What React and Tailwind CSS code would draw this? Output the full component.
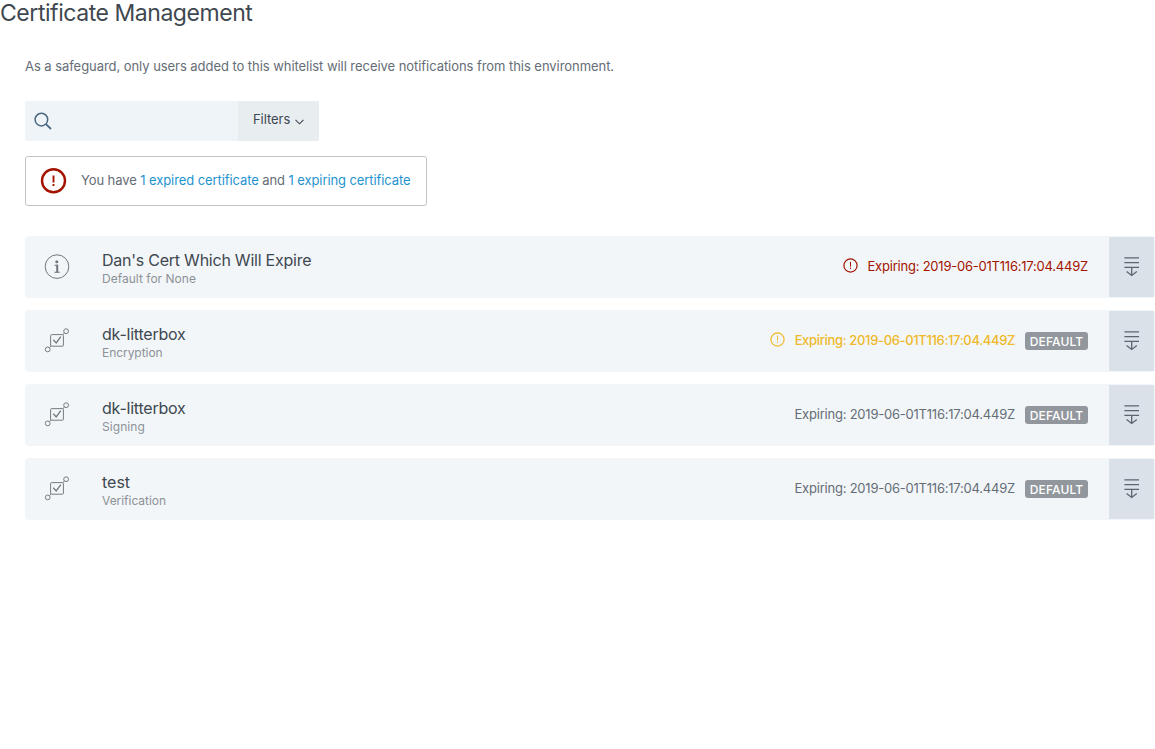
function SearchIcon() {
  return (
    <svg width="18" height="18" viewBox="0 0 18 18" fill="none" stroke="#4a6781" strokeWidth="1.5">
      <circle cx="7.4" cy="7.6" r="6.3" />
      <path d="M12 12.2 17 17" strokeWidth="1.8" />
    </svg>
  );
}

function AlertIcon() {
  return (
    <svg width="27" height="26" viewBox="0 0 27 26" fill="none" stroke="#a31300">
      <circle cx="13.5" cy="12.8" r="11.5" strokeWidth="2.4" />
      <path d="M13.5 7.4V14.4M13.5 16V18" strokeWidth="1.9" />
    </svg>
  );
}

function SmallAlertIcon() {
  return (
    <svg width="15" height="15" viewBox="0 0 15 15" fill="none" stroke="currentColor">
      <circle cx="7.5" cy="7.5" r="6.6" strokeWidth="1.2" />
      <path d="M7.5 3.8V8.6M7.5 9.6V11" strokeWidth="1" />
    </svg>
  );
}

function InfoIcon() {
  return (
    <svg width="26" height="26" viewBox="0 0 26 26" fill="none" stroke="#6f767d">
      <circle cx="13" cy="12.6" r="11.8" strokeWidth="1" />
      <circle cx="12.8" cy="7.7" r="1.5" fill="#6f767d" stroke="none" />
      <path d="M10.5 11.2H13.4M10.4 18.2H15.8" strokeWidth="1.1" />
      <path d="M13.2 10.7V18.4" strokeWidth="2" />
    </svg>
  );
}

function CertIcon() {
  return (
    <svg width="26" height="26" viewBox="0 0 26 26" fill="none" stroke="#757c82" strokeWidth="1">
      <rect x="6.6" y="6.6" width="12.8" height="11.6" rx="1" />
      <path d="M9.3 11.8 12.2 14.9 16.8 8.7" strokeWidth="1.4" />
      <circle cx="22.1" cy="3.2" r="2.4" />
      <circle cx="3.7" cy="21.4" r="2.4" />
      <path d="M20.4 4.9 18.9 6.8M5.4 19.7 7.2 17.9" />
    </svg>
  );
}

function ExpandIcon() {
  return (
    <svg width="16" height="20" viewBox="0 0 16 20" fill="none" stroke="#5c656f" strokeWidth="1.3">
      <path d="M.4 .9H15M.4 5.7H15M.4 10.4H15M7.7 10.4V18.2M2.6 14.6 7.7 18.5 12.8 14.6" />
    </svg>
  );
}

const certificates = [
  { name: "Dan's Cert Which Will Expire", usage: "Default for None", kind: "info", status: "expired", nameSpacing: "tracking-[-0.24px]", usageSpacing: "tracking-[0.02px]" },
  { name: "dk-litterbox", usage: "Encryption", kind: "cert", status: "expiring", isDefault: true, nameSpacing: "tracking-[-0.22px]", usageSpacing: "tracking-[-0.05px]" },
  { name: "dk-litterbox", usage: "Signing", kind: "cert", status: "ok", isDefault: true, nameSpacing: "tracking-[-0.22px]", usageSpacing: "tracking-[0.08px]" },
  { name: "test", usage: "Verification", kind: "cert", status: "ok", isDefault: true, nameSpacing: "tracking-normal", usageSpacing: "tracking-[-0.04px]" },
];

const statusStyles = {
  expired: "text-[#a31300] tracking-[-0.22px]",
  expiring: "text-[#efb92a] font-medium tracking-[-0.34px]",
  ok: "text-[#656d76] tracking-[-0.22px]",
};

function CertificateRow({ cert }) {
  return (
    <li className="flex h-[62px] items-stretch rounded-sm bg-[#f2f6f9] py-px pr-px">
      <div className="flex w-[77px] shrink-0 items-center pl-[19px]">
        {cert.kind === "info" ? <InfoIcon /> : <CertIcon />}
      </div>
      <div className="flex flex-1 flex-col pt-[13px]">
        <span className={`text-[16px] leading-[20px] text-[#3f4850] ${cert.nameSpacing}`}>{cert.name}</span>
        <span className={`text-[12px] leading-[17px] text-[#8d9297] ${cert.usageSpacing}`}>{cert.usage}</span>
      </div>
      <div className="flex items-center pr-[21px] pb-[2px]">
        <div className={`flex items-center text-[13px] leading-5 ${statusStyles[cert.status]}`}>
          {cert.status !== "ok" && (
            <span className="mr-[10px] pb-[2px]">
              <SmallAlertIcon />
            </span>
          )}
          <span>Expiring: 2019-06-01T116:17:04.449Z</span>
        </div>
        {cert.isDefault && (
          <span className="mt-[2px] ml-[10px] h-[18px] w-[63px] rounded-[3px] bg-[#92979d] pt-px text-center text-[12px] leading-[18px] font-medium tracking-[0.12px] text-white">
            DEFAULT
          </span>
        )}
      </div>
      <button className="flex w-[45px] shrink-0 items-center justify-center bg-[#dae1e8]">
        <ExpandIcon />
      </button>
    </li>
  );
}

export default function App() {
  return (
    <main className="min-h-screen bg-white font-['Inter',sans-serif] text-[13px] text-[#656d76]">
      <h1 className="h-[55px] text-[23px] leading-[27px] tracking-[-0.45px] text-[#3f4850]">Certificate Management</h1>
      <section className="pl-[25px]">
        <p className="h-[46px] leading-[22px] tracking-[-0.054px] whitespace-nowrap">
          As a safeguard, only users added to this whitelist will receive notifications from this environment.
        </p>
        <div className="flex h-10 w-[294px] overflow-hidden">
          <div className="flex w-[213px] items-center rounded-l-[3px] bg-[#eef4f7] pl-[9px]">
            <SearchIcon />
          </div>
          <button className="flex w-[81px] items-center bg-[#e8edf0] pb-[3px] pl-[15px] tracking-[-0.05px] text-[#3f4850]">
            Filters
            <svg className="mt-[4px] ml-[5px]" width="9" height="6" viewBox="0 0 9 6" fill="none" stroke="#3f4850" strokeWidth="1.1">
              <path d="M.5.8 4.5 4.8 8.5.8" />
            </svg>
          </button>
        </div>
        <div className="mt-[15px] flex h-[50px] w-[402px] items-center rounded-[3px] border border-[#c0c4c9] pl-[14px] whitespace-nowrap">
          <AlertIcon />
          <p className="ml-[14px] pb-[2px] leading-5 tracking-[-0.09px]">
            You have <a className="text-[#1f93d0]">1 expired certificate</a> and{" "}
            <a className="text-[#1f93d0]">1 expiring certificate</a>
          </p>
        </div>
        <ul className="mt-[30px] flex flex-col gap-3">
          {certificates.map((cert, index) => (
            <CertificateRow key={index} cert={cert} />
          ))}
        </ul>
      </section>
    </main>
  );
}
